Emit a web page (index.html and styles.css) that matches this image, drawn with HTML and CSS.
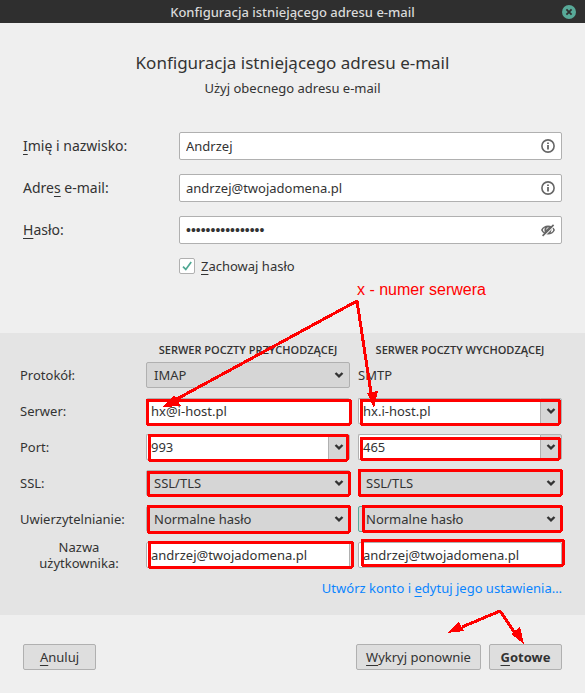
FILE: index.html
```
<!DOCTYPE html>
<html lang="pl">

<head>
    <meta charset="utf-8">
    <title>Konfiguracja istniejącego adresu e-mail</title>
    <link rel="stylesheet" href="styles.css">
</head>

<body>
    <svg class="symbols" aria-hidden="true">
        <symbol id="chevron" viewBox="0 0 10 8">
            <path d="M1.5 2 L5 5.3 L8.5 2" fill="none" stroke="#333" stroke-width="2.4" />
        </symbol>
        <symbol id="info" viewBox="0 0 14 14">
            <circle cx="7" cy="7" r="6.1" fill="none" stroke="#666" stroke-width="1.6" />
            <path d="M6.1 3.4h1.8v1.6H6.1z M6.1 6h1.8v4.6H6.1z" fill="#666" />
        </symbol>
        <symbol id="eye-off" viewBox="0 0 14 14">
            <path d="M0 7 C2.6 1 11.4 1 14 7 C11.4 13 2.6 13 0 7z" fill="#666" />
            <path d="M1.8 7 C2.3 5.7 2.9 5 3.8 4.4 C3.3 6 3.3 7.6 3.8 9.4 C2.9 8.8 2.2 8.1 1.8 7z M10.4 4.6 C11.3 5.2 11.9 6 12.3 7 C11.7 8.3 10.8 9.2 9.6 9.7 C10.5 8 10.8 6.3 10.4 4.6z" fill="#fff" />
            <path d="M5.6 6.4 C5.7 5.4 6.4 4.8 7.4 4.7" fill="none" stroke="#fff" stroke-width="1" />
            <path d="M2.8 13.4 L13.6 2.6" stroke="#fff" stroke-width="1.2" />
            <path d="M1.6 12.8 L12.6 1.8" stroke="#666" stroke-width="1.7" />
        </symbol>
    </svg>

    <div class="dialog">
        <header class="titlebar">
            <span>Konfiguracja istniejącego adresu e-mail</span>
            <button type="button" class="close" aria-label="Zamknij">
                <svg width="14" height="14" viewBox="0 0 14 14">
                    <circle cx="7" cy="7" r="7" fill="#58a998" />
                    <path d="M4.4 4.4 L9.6 9.6 M9.6 4.4 L4.4 9.6" stroke="#2f2f2f" stroke-width="1.8" />
                </svg>
            </button>
        </header>

        <form>
            <div class="intro">
                <h1>Konfiguracja istniejącego adresu e-mail</h1>
                <p>Użyj obecnego adresu e-mail</p>
            </div>

            <div class="account">
                <label for="realname"><u>I</u>mię i nazwisko:</label>
                <div class="field">
                    <input type="text" id="realname" value="Andrzej">
                    <svg class="field-icon"><use href="#info" /></svg>
                </div>
                <label for="email">Adre<u>s</u> e-mail:</label>
                <div class="field">
                    <input type="text" id="email" value="andrzej@twojadomena.pl">
                    <svg class="field-icon"><use href="#info" /></svg>
                </div>
                <label for="password"><u>H</u>asło:</label>
                <div class="field">
                    <input type="password" id="password" value="abcdefghijklmnop">
                    <svg class="field-icon"><use href="#eye-off" /></svg>
                </div>
                <div class="remember">
                    <span class="tick">
                        <input type="checkbox" id="remember" checked>
                        <svg width="10" height="10" viewBox="0 0 10 10">
                            <path d="M1 5.6 L3.8 8.4 L9.2 1" fill="none" stroke="#4fa893" stroke-width="1.7" />
                        </svg>
                    </span>
                    <label for="remember"><u>Z</u>achowaj hasło</label>
                </div>
            </div>

            <div class="servers">
                <div class="server-grid">
                    <h2 class="incoming">Serwer poczty przychodzącej</h2>
                    <h2>Serwer poczty wychodzącej</h2>

                    <label for="in-protocol">Protokół:</label>
                    <div class="select">
                        <select id="in-protocol"><option>IMAP</option><option>POP3</option></select>
                        <svg class="chevron"><use href="#chevron" /></svg>
                    </div>
                    <span>SMTP</span>

                    <label for="in-server">Serwer:</label>
                    <input type="text" id="in-server" value="hx@i-host.pl">
                    <div class="combo">
                        <input type="text" aria-label="Serwer wychodzący" value="hx.i-host.pl">
                        <button type="button" aria-label="Lista serwerów"><svg class="chevron"><use href="#chevron" /></svg></button>
                    </div>

                    <label for="in-port">Port:</label>
                    <div class="combo">
                        <input type="text" id="in-port" value="993">
                        <button type="button" aria-label="Lista portów"><svg class="chevron"><use href="#chevron" /></svg></button>
                    </div>
                    <div class="combo">
                        <input type="text" aria-label="Port wychodzący" value="465">
                        <button type="button" aria-label="Lista portów"><svg class="chevron"><use href="#chevron" /></svg></button>
                    </div>

                    <label for="in-ssl">SSL:</label>
                    <div class="select">
                        <select id="in-ssl"><option>SSL/TLS</option><option>STARTTLS</option></select>
                        <svg class="chevron"><use href="#chevron" /></svg>
                    </div>
                    <div class="select">
                        <select aria-label="SSL wychodzący"><option>SSL/TLS</option><option>STARTTLS</option></select>
                        <svg class="chevron"><use href="#chevron" /></svg>
                    </div>

                    <label for="in-auth">Uwierzytelnianie:</label>
                    <div class="select">
                        <select id="in-auth"><option>Normalne hasło</option></select>
                        <svg class="chevron"><use href="#chevron" /></svg>
                    </div>
                    <div class="select focused">
                        <select aria-label="Uwierzytelnianie wychodzące"><option>Normalne hasło</option></select>
                        <svg class="chevron"><use href="#chevron" /></svg>
                    </div>

                    <label for="in-user" class="two-lines">Nazwa użytkownika:</label>
                    <input type="text" id="in-user" value="andrzej@twojadomena.pl">
                    <input type="text" aria-label="Nazwa użytkownika wychodząca" value="andrzej@twojadomena.pl">
                </div>
                <a href="#" class="advanced">Utwórz konto i <u>e</u>dytuj jego ustawienia…</a>
            </div>

            <div class="buttons">
                <button type="button" class="cancel"><u>A</u>nuluj</button>
                <button type="button" class="retest"><u>W</u>ykryj ponownie</button>
                <button type="submit" class="done"><u>G</u>otowe</button>
            </div>
        </form>

        <!-- red notes drawn over the dialog -->
        <svg class="notes" width="585" height="693" viewBox="0 0 585 693">
            <text x="357" y="295">x - numer serwera</text>
            <g class="frames">
                <rect x="147" y="400" width="203" height="24" />
                <rect x="149" y="435" width="198" height="25" />
                <rect x="148" y="472" width="201" height="23" />
                <rect x="148" y="506" width="201" height="26" />
                <rect x="149" y="542" width="203" height="25" />
                <rect x="361" y="400" width="198" height="24" />
                <rect x="361" y="438" width="198" height="21" />
                <rect x="359" y="470" width="202" height="25" />
                <rect x="363" y="506" width="198" height="25" />
                <rect x="362" y="540" width="201" height="25" />
            </g>
            <g class="lines">
                <path d="M175 400 L357 301 L371 393" />
                <path d="M462 627 L500 611 L515 633" />
            </g>
            <g class="heads">
                <path d="M163 407 L174 395 L181 406z" />
                <path d="M374 408 L367 393 L378 391z" />
                <path d="M447 633 L459 622 L464 631z" />
                <path d="M524 644 L511 634 L520 627z" />
            </g>
        </svg>
    </div>
</body>

</html>
```
FILE: styles.css
```
body {
    margin: 0;
    background-color: #efefef;
    color: #333;
    font-family: "Noto Sans", "Open Sans", sans-serif;
    font-size: 13px;
    line-height: 16px;
}

.symbols {
    display: none;
}

.dialog {
    position: relative;
}

input, select, button {
    box-sizing: border-box;
    margin: 0;
    font: inherit;
    color: inherit;
}

u {
    text-decoration: underline;
    text-underline-offset: 3px;
}

.titlebar {
    display: grid;
    grid-template-columns: 1fr auto 1fr;
    align-items: center;
    height: 23px;
    padding: 0 9px;
    background-color: #2f2f2f;
    color: #dadada;
    font-weight: 500;
}

.titlebar span {
    grid-column: 2;
}

.close {
    display: flex;
    justify-self: end;
    padding: 0;
    border: none;
    background: none;
}

.intro {
    padding: 28px 0 36px;
    text-align: center;
}

h1 {
    margin: 0;
    font-size: 17px;
    font-weight: normal;
    line-height: 24px;
}

.intro p {
    margin: 5px 0 0;
}

.account {
    display: grid;
    grid-template-columns: 156px 1fr;
    row-gap: 14px;
    align-items: center;
    padding: 0 23px 59px;
    font-size: 14px;
}

.field {
    position: relative;
    display: flex;
    font-size: 13px;
}

input[type="text"], input[type="password"] {
    width: 100%;
    min-width: 0;
    height: 26px;
    padding: 0 4px;
    border: 1px solid #b0b0b0;
    border-radius: 2px;
    background-color: white;
}

.field input[type] {
    height: 28px;
    padding: 0 30px 0 6px;
}

.field input[type="password"] {
    font-family: "Liberation Sans", sans-serif;
    font-size: 14px;
}

.field-icon {
    position: absolute;
    top: 7px;
    right: 7px;
    width: 14px;
    height: 14px;
}

.remember {
    grid-column: 2;
    display: flex;
    align-items: center;
    gap: 6px;
    font-size: 13px;
}

.tick {
    position: relative;
    display: flex;
}

.tick input {
    appearance: none;
    width: 16px;
    height: 16px;
    border: 1px solid #b0b0b0;
    border-radius: 2px;
    background-color: white;
}

.tick svg {
    position: absolute;
    top: 3px;
    left: 3px;
    pointer-events: none;
}

.servers {
    display: flex;
    flex-direction: column;
    padding: 9px 23px 19px 20px;
    background-color: #e4e4e4;
}

.server-grid {
    display: grid;
    grid-template-columns: 118px 1fr 1fr;
    gap: 10px 8px;
    align-items: center;
}

h2 {
    margin: 0 0 -6px;
    font-family: "Open Sans", "Noto Sans", sans-serif;
    font-size: 11px;
    font-weight: 600;
    line-height: 16px;
    text-align: center;
    text-transform: uppercase;
    white-space: nowrap;
}

h2.incoming {
    grid-column: 2;
}

/* the label is taller than its field, keep the row at field height */
.two-lines {
    margin: -3px 0;
    text-align: center;
}

.select {
    position: relative;
    display: flex;
}

.select select {
    appearance: none;
    width: 100%;
    height: 26px;
    padding: 0 24px 0 7px;
    border: 1px solid #b0b0b0;
    border-radius: 2px;
    background-color: #d6d6d6;
}

.focused select {
    border-color: #58a998;
}

.chevron {
    width: 10px;
    height: 8px;
}

.select .chevron {
    position: absolute;
    top: 9px;
    right: 6px;
    pointer-events: none;
}

.combo {
    display: flex;
}

.combo input[type] {
    border-right: none;
    border-radius: 2px 0 0 2px;
}

.combo button {
    flex: none;
    display: flex;
    align-items: center;
    justify-content: center;
    width: 22px;
    padding: 0;
    border: 1px solid #b0b0b0;
    border-radius: 0 2px 2px 0;
    background-color: #d6d6d6;
}

.advanced {
    align-self: flex-end;
    margin-top: 12px;
    color: #0a84ff;
    text-decoration: none;
}

.buttons {
    display: flex;
    gap: 8px;
    padding: 29px 23px 23px;
}

.buttons button {
    width: 73px;
    height: 26px;
    padding: 0;
    border: 1px solid #b0b0b0;
    border-radius: 2px;
    background-color: #dedede;
}

.buttons .cancel {
    margin-right: auto;
}

.buttons .retest {
    width: 125px;
}

.buttons .done {
    font-weight: bold;
}

.notes {
    position: absolute;
    top: 0;
    left: 0;
    pointer-events: none;
    shape-rendering: crispEdges;
}

.notes text {
    fill: #f00;
    font-family: "Liberation Sans", Arial, sans-serif;
    font-size: 16px;
}

.frames, .lines {
    fill: none;
    stroke: #f00;
    stroke-width: 3;
    stroke-linejoin: round;
}

.heads {
    fill: #f00;
}
```
